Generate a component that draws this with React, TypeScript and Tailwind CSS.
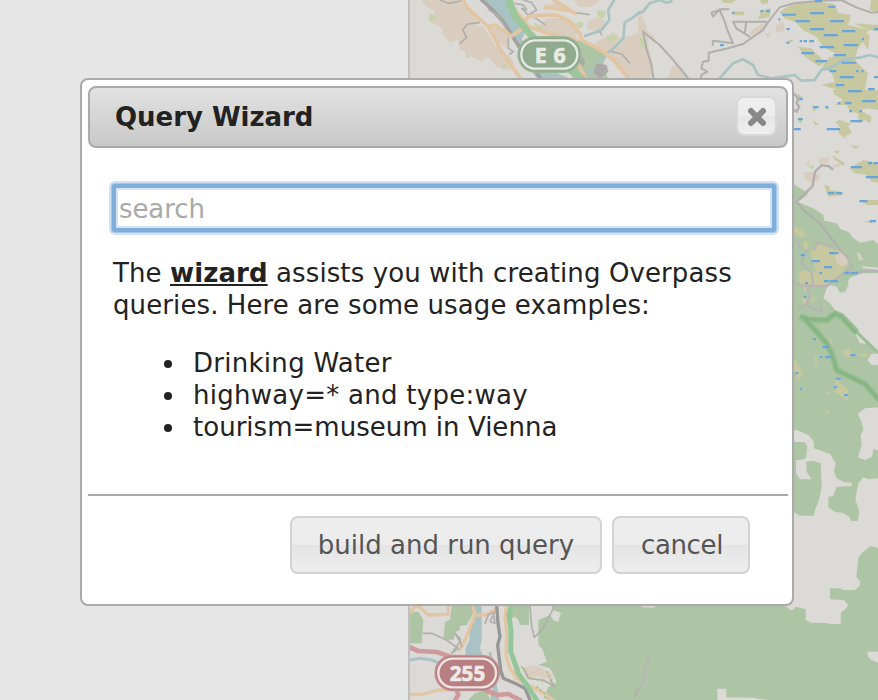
import React from "react";

const TAN = "#d9cdbf";
const GREEN = "#adc5a4";
const LAND = "#dcdad6";
const WATER = "#a9c2c4";
const ROAD = "#e2c5a2";
const GREY = "#b1afad";
const MARSH = "#c7c8a0";
const BLUE = "#68a5dc";

function Dashes({ items }: { items: number[][] }) {
  return (
    <g fill={BLUE}>
      {items.map(([x, y, w], i) => (
        <rect key={i} x={x} y={y - 3} width={w} height="6.5" rx="1" />
      ))}
    </g>
  );
}

function NorthWest() {
  return (
    <svg x="400" y="0" width="240" height="80" viewBox="0 0 720 240" fill="none" strokeLinejoin="round" strokeLinecap="round">
      <path fill={TAN} d="M62 0H190L215 40 240 62 225 80 248 78 262 100 282 130 300 155 330 170 345 195 330 210 290 200 262 170 245 185 205 165 178 145 175 118 150 128 125 100 130 85 95 68 105 35 80 20ZM272 78 310 90 328 112 320 145 295 125ZM395 0 520 40 490 10 430 12ZM405 85 445 55 500 52 540 80 525 118 470 105ZM520 0 600 0 570 22 535 20ZM565 60 600 52 620 68 595 92 560 88ZM585 130 640 95 660 115 720 100V234H690L640 175 600 165Z" />
      <path fill="#c5d3a9" d="M88 38 108 50 98 68 86 62ZM197 158 210 170 200 175ZM258 155 264 162 255 172ZM308 185 320 200 308 210ZM590 30 618 35 612 55 595 50ZM530 65 552 68 545 85 530 80ZM620 110 645 105 648 118 630 126ZM400 68 425 78 428 90 410 84Z" />
      <path fill={WATER} d="M245 0H325L350 55 380 88 365 118 395 190 450 210 520 240H415L380 195 345 125 305 70Z" />
      <path stroke="#a2a1a0" strokeWidth="11" d="M240 -5 278 30 310 65 335 105 370 160 425 240" />
      <path stroke={GREY} strokeWidth="5" d="M265 28 295 48 325 95M120 0 145 10 175 5 182 0M180 130 200 112 188 90 202 72 238 68M325 115 325 145 340 155 330 162M345 10 370 15 380 30 365 25 385 45 410 30 395 8 370 0M525 38 568 44M400 50 435 74M560 105 600 95 605 105M635 155 665 162 688 188" />
      <path stroke={WATER} strokeWidth="8" d="M642 0 625 30 628 60 605 90 555 108M722 35 695 55 674 68 670 115 640 145 620 160 590 200 560 225" />
      <path fill={GREEN} d="M520 125 545 120 620 165 610 190 625 240H520L505 205 540 185Z" />
      <path stroke={WATER} strokeWidth="8" d="M620 165 590 200 560 225" />
      <path fill="#aaa9a7" d="M590 190 620 195 625 215 600 235 580 220ZM540 165 556 182 550 198 540 190Z" />
      <path stroke={ROAD} strokeWidth="11" d="M188 -5 200 22 265 80 290 125 305 155 365 240M265 80 285 75 335 108 375 80M345 30 385 78 440 100 530 120M370 70 385 50 420 46 470 45 510 65 540 100 545 120 610 155 640 180 690 240M435 22 500 30 520 35M460 0 525 40M525 175 560 240" />
      <path stroke="#9bc79a" strokeWidth="21" d="M325 -5 345 48 388 100 440 150 510 210 550 240" />
      <rect x="352" y="108" width="193" height="111" rx="55" fill="#9db69a" />
      <rect x="356" y="112" width="185" height="103" rx="51" fill="#90aa8e" />
      <rect x="364" y="121" width="168" height="85" rx="42" stroke="#e7eae4" strokeWidth="7" />
      <text x="404" y="188" textLength="93" fill="#e9ece6" stroke="#e9ece6" strokeWidth="2" className="font-['Noto_Sans'] text-[64px] font-bold">E 6</text>
    </svg>
  );
}

function NorthEast() {
  return (
    <svg x="638" y="0" width="240" height="90" viewBox="0 0 720 270" fill="none" strokeLinejoin="round" strokeLinecap="round">
      <path fill={TAN} d="M0 48 15 52 30 95 32 140 45 190 45 225 30 240 0 235ZM30 95 50 110 55 130 40 125ZM90 235 100 205 115 188 130 210 145 235ZM335 95 365 75 390 65 370 100 345 112ZM412 75 435 65 442 90 415 100ZM380 98 400 100 390 115Z" />
      <path fill="#c1d5a6" d="M5 110 22 120 20 145 8 135Z" />
      <path fill={MARSH} d="M250 0H295L280 10 255 8ZM365 0H390V10L372 12ZM282 33 320 35 318 46 290 45ZM370 30 398 25 395 50 360 58ZM425 35 470 8 540 5 590 12 600 38 640 45 630 75 690 90 680 120 660 145 650 180 690 220 680 270H600L550 255 590 245 580 215 550 205 570 175 600 165 555 140 535 110 495 90 475 68 440 55ZM450 120 470 118 455 130ZM480 140 520 145 540 165 560 185 545 200 500 170ZM700 0H720V35L695 30ZM670 90 695 105 690 150 675 125ZM645 70 720 75V92L690 90Z" />
      <path stroke={GREY} strokeWidth="6" d="M155 240 110 185 65 135 15 95 25 145 40 195 47 240M272 28 245 28 225 50 220 38 245 30 260 65 268 90 285 130 225 122 224 135M385 65H340L285 65 295 85 335 110M325 65 320 100M212 158 270 145 315 132 375 90 395 60 425 22 465 10 540 3 610 0 655 22 700 38 720 36M212 158 212 182 195 185 190 205 208 215 190 225 188 240" />
      <path stroke={WATER} strokeWidth="8" d="M0 42 15 35 35 10 65 0 85 8 100 5V-5M240 240 285 190 315 178 345 195 360 225 400 235 470 225 490 242 530 240 550 210 575 205 620 178 670 172 695 165 720 172" />
      <Dashes items={[[282,39,7],[367,33,8],[385,33,11],[530,3,22],[571,20,22],[432,44,42],[516,39,42],[473,63,43],[576,63,42],[516,87,43],[612,93,40],[557,105,43],[446,87,9],[445,128,9],[485,123,7],[497,123,10],[514,123,14],[617,135,43],[545,141,43],[490,159,38],[587,165,37],[532,183,35],[611,188,44],[575,213,20],[653,213,9],[670,213,7],[605,231,43],[593,255,26],[690,267,20],[708,87,12],[708,231,12],[246,135,12],[421,58,6],[672,117,6]]} />
    </svg>
  );
}

function EastUpper() {
  return (
    <svg x="780" y="90" width="98" height="160" viewBox="0 30 294 480" fill="none" strokeLinejoin="round" strokeLinecap="round">
      <path fill={MARSH} d="M140 22 180 10 165 0H294V90L265 85 240 90 275 110 270 130 255 120 235 130 235 100 210 95 200 75 165 75 190 60 165 45 155 25ZM180 120 205 130 215 125 205 140 215 158 195 170 205 182 175 160 180 140 165 125ZM50 40 68 50 60 65ZM95 75 115 80 100 97ZM52 115 70 118 60 132ZM95 108 105 125 118 135 105 135ZM135 75 147 85 138 90ZM210 195 240 200 225 206ZM160 215 178 210 175 222ZM155 225 195 250 190 258 165 240ZM208 265 250 240 294 248V308L275 305 260 285 225 280ZM132 315 148 318 150 330 185 335 188 345 145 350ZM240 360 294 360V375L260 375ZM250 425 290 418 275 430Z" />
      <path fill={TAN} d="M115 235 145 232 150 245 120 255ZM75 245 90 242 85 260ZM65 280 90 275 120 285 118 300 90 310ZM155 255 185 250 180 262 160 264Z" />
      <path fill="#c4d8ad" d="M85 260 98 253 104 262 92 268Z" />
      <path fill={GREEN} d="M40 312 85 340 70 355 52 365 100 385 130 405 133 422 170 430 182 448 205 455 220 475 242 488 280 480 294 492V540H40Z" />
      <path fill={MARSH} d="M40 440 65 450 78 470 60 470 40 455ZM75 480 88 490 80 510 68 500ZM115 490 140 500 165 512 175 520 160 540H90Z" />
      <path stroke={GREY} strokeWidth="7" d="M42 42 55 55 50 70 58 80 50 95 42 90M157 267 145 258 125 256 105 275 98 318 50 365 75 395 120 430 150 470 180 510 210 545" />
      <path stroke="#bab2b5" strokeWidth="6" d="M40 475 55 485 60 510 75 530 100 520 110 490 130 490 150 500 170 492" />
      <Dashes items={[[168,15,24],[204,33,42],[264,27,18],[246,63,42],[195,69,20],[173,69,8],[58,57,10],[101,81,15],[136,81,9],[208,93,8],[238,93,8],[211,123,36],[54,117,14],[40,147,22],[140,147,40],[212,261,34],[264,249,12],[280,249,14],[257,291,37],[143,339,20],[167,339,20],[238,363,24],[270,423,18],[147,519,27],[62,525,12]]} />
    </svg>
  );
}

function EastMiddle() {
  return (
    <svg x="780" y="250" width="98" height="180" viewBox="0 0 294 540" fill="none" strokeLinejoin="round" strokeLinecap="round">
      <path fill={GREEN} d="M0 0H294V540H0Z" />
      <path fill={MARSH} d="M92 0H180L200 25 205 45 185 70 145 105H85L75 125 55 90 60 65 85 60 110 70 100 40ZM65 145 80 140 82 165 70 160ZM95 140 105 145 98 162ZM115 240 160 275 155 285 125 270ZM185 305 205 295 225 320 200 320ZM240 310 262 312 262 322 242 320ZM102 325 112 320 108 355ZM42 325 70 370 55 390 42 365ZM165 385 205 420 205 452 165 425ZM130 420 150 430 140 435ZM135 470 150 492 140 490Z" />
      <path fill={TAN} d="M165 10 195 12 205 40 185 48 168 35ZM230 8 240 8 250 30 238 32Z" />
      <path fill={LAND} d="M294 70V305L250 262 205 210 190 190 165 180 150 160 130 145 140 115 150 105 170 110 180 128 195 125 205 105 205 90 215 80 250 70ZM222 240 262 270 255 282 238 278ZM262 330 275 312 294 310V345L275 345ZM233 492 255 475 290 472 294 475V540H250L245 515Z" />
      <path stroke="#9cbf96" strokeWidth="21" d="M66 205 90 210 140 211 165 192 188 204 225 242M70 204 105 240 140 280 155 310 170 360 210 380 255 402 298 450" />
      <path stroke="#9cbf96" strokeWidth="9" d="M225 242 294 308" />
      <path stroke="#87b584" strokeWidth="11" d="M65 200 90 208 140 210 165 190 185 200 225 245M68 200 105 240 140 280 155 310 170 360 210 380 255 402 298 450" />
      <path stroke="#b8b1b6" strokeWidth="6" d="M42 100 65 105 80 108 100 105 95 70 65 40 70 10 90 -5M100 108 140 108 180 78 200 65 216 50 205 25 180 0M200 70 240 65 294 62M82 110 88 135 80 160 55 180M80 165 125 185 120 155" />
      <path stroke={LAND} strokeWidth="6" d="M250 52 294 56" />
      <Dashes items={[[147,9,28],[94,33,26],[132,51,25],[62,15,13],[118,69,8],[132,93,15],[149,93,25],[75,99,9],[193,69,15],[212,69,22],[71,141,8],[99,267,9],[127,291,19],[136,321,17],[120,321,7],[46,369,9],[211,315,15],[167,386,15],[162,411,9],[192,435,13],[60,416,6]]} />
    </svg>
  );
}

function EastLower() {
  return (
    <svg x="780" y="430" width="98" height="180" viewBox="0 0 294 540">
      <path fill={LAND} d="M0 0H294V540H0Z" />
      <path fill={GREEN} d="M50 0H250L242 15 245 45 234 82 255 90 275 82 280 58 294 60V145L265 148 250 142 235 160 226 208 238 245 233 273 213 273 208 260 190 250 165 245 145 232V200L160 198 170 170 215 168V158L190 155 170 145 162 125 167 100 150 72 102 55V35L85 15ZM40 35 75 37 82 50 78 85 62 90 48 90V130L60 148 95 148 80 125 78 95 100 92 122 100 125 170 117 210 105 240 102 257H60L40 245ZM294 355 272 348 245 370 235 385 229 440 241 455 238 468 225 480H190L180 475H150V508L190 510 202 520 202 540H294Z" />
      <path fill={GREEN} d="M0 530 22 534 25 540H0ZM45 533H75V540H45Z" />
    </svg>
  );
}

function SouthWest() {
  return (
    <svg x="400" y="600" width="240" height="100" viewBox="0 30 720 300" fill="none" strokeLinejoin="round" strokeLinecap="round">
      <path fill={GREEN} d="M30 65 55 65 70 90 65 160H30ZM155 45H225L215 80 200 105 180 108V120L168 125 160 150 130 148 135 95 150 90ZM340 45H388L387 105 360 105 355 90 345 80 325 90ZM455 45H720V330H455L430 325 445 290 465 285 468 270 450 235 415 225 440 215 430 185 425 175 415 165 415 90 450 75 462 92 475 95 480 75 485 70 460 60ZM225 310 260 300 270 330H205Z" />
      <path fill={WATER} d="M225 45H245V150L240 175 250 200 225 240 200 200 195 180 208 150 210 120 225 80ZM280 285 290 285 298 330H270Z" />
      <path stroke={WATER} strokeWidth="9" d="M30 210 60 205 95 210 130 225M270 190 285 250 285 310" />
      <path fill={TAN} d="M370 235 400 225 450 245 465 270 430 265 415 258 390 265Z" />
      <path stroke={ROAD} strokeWidth="10" d="M30 70 45 48 60 52 85 75 145 73 145 45M180 180 195 150 205 125 225 75 218 45M225 75 260 75 290 55M320 45 315 85 320 130 318 195 330 235 350 265 385 285 440 315 460 330M30 314 70 312 115 300 170 300M355 235 340 250" />
      <path stroke="#979797" strokeWidth="10" d="M290 45 294 100 300 140 293 165 297 200 303 245 310 265 345 280 375 295 390 330" />
      <path stroke={GREY} strokeWidth="5" d="M70 130 95 130 140 150 175 175 155 190 180 155 165 130 180 145 185 170M255 100 265 75 285 65 270 95 285 100 282 80M465 45 445 85 425 120 403 142 395 110 390 45M370 235 385 265 430 270 465 290 450 270M720 280 705 320" />
      <path stroke="#a4bd83" strokeWidth="4" strokeDasharray="5 8" d="M365 230 390 265 435 275 460 285M410 290 435 310M440 245 465 290" />
      <path stroke="#94c69a" strokeWidth="15" d="M335 45 327 75 333 125 332 185 343 215 355 250 380 285 410 330" />
      <path stroke="#ce9a9c" strokeWidth="14" d="M30 172 55 183 110 186 150 200 210 240 245 295 290 315 325 312 360 330M170 300 175 315 165 330" />
      <rect x="103" y="194" width="197" height="110" rx="55" fill="#c29394" />
      <rect x="107" y="198" width="189" height="102" rx="51" fill="#b77f82" />
      <rect x="115" y="206" width="173" height="86" rx="43" stroke="#eee4e2" strokeWidth="7" />
      <text x="149" y="272" textLength="107" fill="#f0e8e6" stroke="#f0e8e6" strokeWidth="2" className="font-['Noto_Sans'] text-[62px] font-bold">255</text>
    </svg>
  );
}

function SouthEast() {
  return (
    <svg x="638" y="600" width="240" height="100" viewBox="0 30 720 300" fill="none">
      <path fill={GREEN} d="M0 30H720V330H0Z" />
      <path fill={LAND} d="M420 45 445 50 462 62 475 50 503 58V90L520 98 555 98 580 102H608V68L625 55 630 45 618 30H577V0H460V30ZM688 185H720V218L700 210 690 200ZM238 296H265V322L345 323 390 330H238ZM10 48H55L45 53 15 52Z" />
      <path stroke="#b8b5b4" strokeWidth="7" d="M33 200 18 245 16 275 0 305" />
    </svg>
  );
}

function MapPane() {
  return (
    <svg className="block h-[700px] w-[468px] shrink-0" viewBox="410 0 468 700" aria-hidden="true">
      <rect x="410" width="468" height="700" fill={LAND} />
      <EastUpper />
      <NorthWest />
      <NorthEast />
      <EastMiddle />
      <EastLower />
      <SouthWest />
      <SouthEast />
    </svg>
  );
}

function DialogButton({ children, className }: { children: React.ReactNode; className: string }) {
  return (
    <button className={`h-[58px] whitespace-nowrap rounded-lg border-2 border-[#d3d3d3] bg-[linear-gradient(#eeeeee_0%,#ececec_49%,#e4e4e4_51%,#eeeeee_100%)] text-[#555] ${className}`}>
      {children}
    </button>
  );
}

const examples = [
  { text: "Drinking Water", tracking: "tracking-[0.28px]" },
  { text: "highway=* and type:way", tracking: "tracking-[0.27px]" },
  { text: "tourism=museum in Vienna", tracking: "tracking-[0.02px]" },
];

export default function App() {
  return (
    <div className="relative h-[700px] w-[878px] overflow-hidden bg-[#e6e6e6] font-['DejaVu_Sans',sans-serif] text-[26px] leading-8 text-[#222]">
      <div className="flex">
        <div className="h-[700px] w-[410px] shrink-0 border-r-2 border-[#bfbfbf]" />
        <MapPane />
      </div>
      <section role="dialog" className="absolute left-20 top-[78px] flex h-[528px] w-[714px] flex-col rounded-lg border-2 border-[#aaa] bg-white p-[6px] pr-1">
        <header className="flex h-[62px] w-[700px] shrink-0 items-center justify-between rounded-lg border-2 border-[#aaa] bg-linear-to-b from-[#e2e2e2] to-[#c8c8c8] pl-[25px] pr-[9px]">
          <h1 className="font-bold tracking-[-0.03px]">Query Wizard</h1>
          <button aria-label="close" className="mb-0.5 flex h-10 w-[41px] items-center justify-center rounded-lg border-2 border-[#d8d8d8] bg-[linear-gradient(#eeeeee_0%,#ececec_49%,#e6e6e6_51%,#eeeeee_100%)]">
            <svg className="mt-0.5 h-5 w-5" viewBox="0 0 20 20" stroke="#888" strokeWidth="6" strokeLinecap="round">
              <path d="M4 4 16 16M16 4 4 16" />
            </svg>
          </button>
        </header>
        <div className="flex w-[700px] grow flex-col pl-[25px] pr-[13px] pt-9">
          <input
            placeholder="search"
            className="ml-[-1px] h-12 w-[664px] shrink-0 rounded-[3px] border-4 border-[#80aedb] bg-white px-[3px] pt-0.5 tracking-[-0.1px] shadow-[0_0_0_1px_#a3c7ea,0_0_0_3px_#d2e2f4,inset_0_0_0_2px_#d5e3f3] outline-none placeholder:text-[#a9a9a9]"
          />
          <p className="mt-[25px] whitespace-nowrap tracking-[0.1px]">
            The <b className="underline decoration-2 underline-offset-2">wizard</b> assists you with creating Overpass
            <br />
            queries. Here are some usage examples:
          </p>
          <ul className="mt-[26px] list-none pl-[51px]">
            {examples.map(({ text, tracking }) => (
              <li key={text} className="flex items-center gap-[21px] whitespace-nowrap">
                <span className="mt-0.5 size-2 rounded-full bg-[#222]" />
                <span className={tracking}>{text}</span>
              </li>
            ))}
          </ul>
        </div>
        <footer className="flex h-[104px] w-[700px] shrink-0 items-start justify-end gap-[10px] border-t-2 border-[#aaa] pr-[38px] pt-5">
          <DialogButton className="w-[312px]">build and run query</DialogButton>
          <DialogButton className="w-[138px] pl-0.5 tracking-[-0.35px]">cancel</DialogButton>
        </footer>
      </section>
    </div>
  );
}
